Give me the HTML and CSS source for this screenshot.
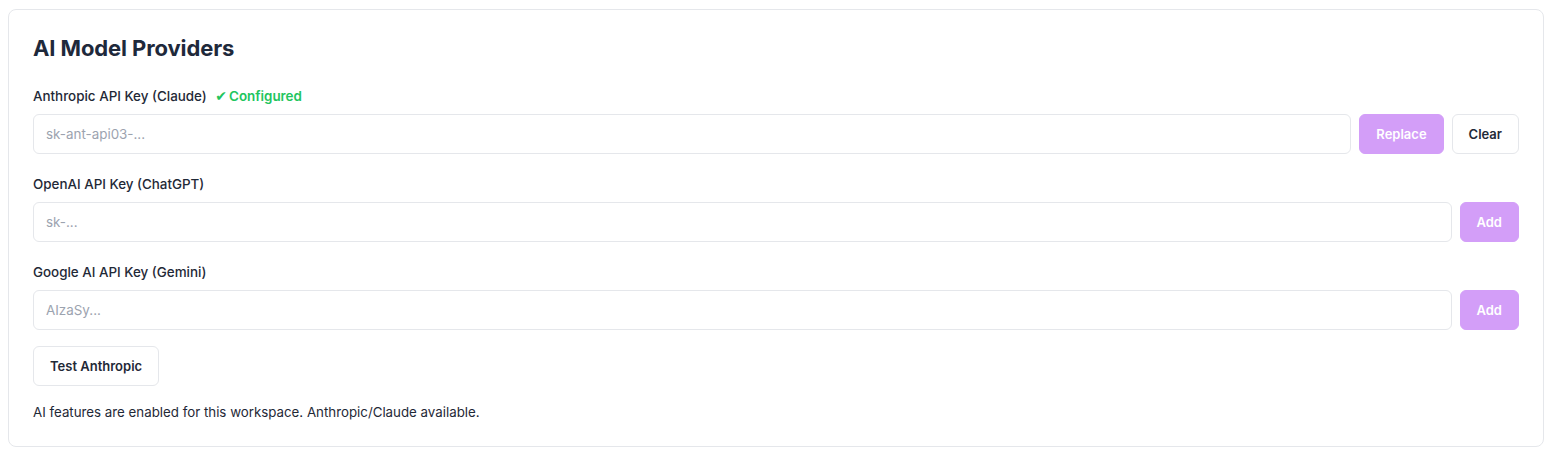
FILE: index.html
```html
<!DOCTYPE html>
<html>
<head>
<meta charset="utf-8">
<link rel="stylesheet" href="styles.css">
</head>
<body>
<section class="card">
  <h2 class="title">AI Model Providers</h2>
  <div class="field">
    <label class="label">Anthropic API Key (Claude) <span class="ok"><span class="tick">✔</span>Configured</span></label>
    <div class="row">
      <input class="input" placeholder="sk-ant-api03-...">
      <button class="btn primary">Replace</button>
      <button class="btn">Clear</button>
    </div>
  </div>
  <div class="field">
    <label class="label">OpenAI API Key (ChatGPT)</label>
    <div class="row">
      <input class="input" placeholder="sk-...">
      <button class="btn primary">Add</button>
    </div>
  </div>
  <div class="field">
    <label class="label">Google AI API Key (Gemini)</label>
    <div class="row">
      <input class="input" placeholder="AIzaSy...">
      <button class="btn primary">Add</button>
    </div>
  </div>
  <div class="actions">
    <button class="btn">Test Anthropic</button>
  </div>
  <p class="note">AI features are enabled for this workspace. Anthropic/Claude available.</p>
</section>
</body>
</html>
```
FILE: styles.css
```css
* { box-sizing: border-box; }
body {
  margin: 0;
  padding: 9px 9px 8px 8px;
  background: #fff;
  font-family: Inter, "Noto Sans", sans-serif;
  color: #1f2937;
}
.card {
  border: 1px solid #e5e7eb;
  border-radius: 8px;
  padding: 24px;
  background: #fff;
}
.title {
  margin: 0 0 24px;
  font-size: 22px;
  line-height: 28px;
  font-weight: 700;
  color: #1e293b;
  letter-spacing: -0.1px;
}
.field { margin-bottom: 20px; }
.field:nth-of-type(3) { margin-bottom: 16px; }
.label {
  display: block;
  height: 20px;
  font-size: 13.4px;
  line-height: 20px;
  font-weight: 500;
  margin-bottom: 8px;
  color: #1f2937;
}
.ok {
  color: #22c55e;
  font-weight: 600;
  margin-left: 5px;
}
.tick {
  font-family: "DejaVu Sans", sans-serif;
  font-size: 14px;
  line-height: 1;
  margin-right: 2px;
}
.row {
  display: flex;
  gap: 8px;
}
.input {
  flex: 1;
  height: 40px;
  border: 1px solid #e5e7eb;
  border-radius: 6px;
  padding: 0 12px;
  font-family: inherit;
  font-size: 13.4px;
  color: #1f2937;
  outline: none;
}
.input::placeholder { color: #9ca3af; }
.btn {
  height: 40px;
  padding: 0 16px;
  border: 1px solid #e5e7eb;
  border-radius: 6px;
  background: #fff;
  font-family: inherit;
  font-size: 13px;
  font-weight: 600;
  color: #1f2937;
}
.btn.primary {
  background: #d39ef8;
  border-color: #d39ef8;
  color: #fff;
}
.actions { margin-bottom: 16px; display: flex; }
.note {
  margin: 0;
  font-size: 13.3px;
  line-height: 20px;
  color: #1f2937;
}
```
